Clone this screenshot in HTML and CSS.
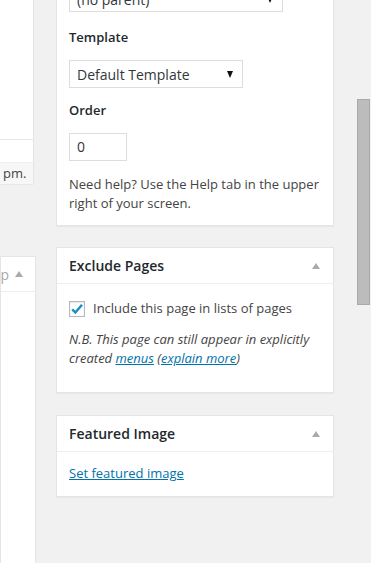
FILE: index.html
```
<!DOCTYPE html>
<html>
<head>
<meta http-equiv="content-type" content="text/html;charset=UTF-8" />
<title>Edit Page</title>
<link rel="stylesheet" href="styles.css">
</head>
<body>
  <div class="wrap">
    <div class="main-col">
      <div class="editor">
        <div class="editor-area"></div>
        <div class="editor-gap"></div>
        <div class="status-bar">pm.</div>
      </div>
      <div class="postbox left-box">
        <h2 class="hndle"><span class="cut">lp</span><span class="toggle"></span></h2>
        <div class="inside"></div>
      </div>
    </div>

    <div class="side-col">
      <div class="postbox attrs">
        <div class="inside">
          <div class="fake-select parent-select"><span>(no parent)</span><span class="arrow"></span></div>
          <p class="attr-label">Template</p>
          <div class="fake-select template-select"><span>Default Template</span><span class="arrow"></span></div>
          <p class="attr-label">Order</p>
          <div class="order-input">0</div>
          <p class="help">Need help? Use the Help tab in the upper right of your screen.</p>
        </div>
      </div>

      <div class="postbox exclude">
        <h2 class="hndle"><span>Exclude Pages</span><span class="toggle"></span></h2>
        <div class="inside">
          <label class="check-row">
            <span class="checkbox">
              <svg width="14" height="14" viewBox="0 0 14 14"><path d="M2.2 7.4 L5.4 10.6 L12 2.8" fill="none" stroke="#1e8cbe" stroke-width="2.4"/></svg>
            </span>
            Include this page in lists of pages
          </label>
          <p class="note">N.B. This page can still appear in explicitly created <a href="#">menus</a> (<a href="#">explain more</a>)</p>
        </div>
      </div>

      <div class="postbox featured">
        <h2 class="hndle"><span>Featured Image</span><span class="toggle"></span></h2>
        <div class="inside">
          <a href="#">Set featured image</a>
        </div>
      </div>
    </div>
  </div>

  <div class="scroll-thumb"></div>
</body>
</html>
```

FILE: styles.css
```
html, body {
  margin: 0;
  padding: 0;
  background: #f1f1f1;
  overflow: hidden;
}
body {
  font-family: "Open Sans", "Liberation Sans", sans-serif;
  font-size: 13px;
  line-height: 19px;
  color: #444;
  height: 563px;
}
a {
  color: #0073aa;
  text-decoration: underline;
}

.wrap {
  display: flex;
  gap: 20px;
  align-items: flex-start;
}

/* left column: only the right edge of the post body shows */
.main-col {
  flex: none;
  width: 36px;
}
.editor {
  width: 34px;
  background: #fff;
  border-right: 1px solid #e5e5e5;
  box-sizing: border-box;
}
.editor-area {
  height: 139px;
  border-bottom: 1px solid #e8e8e8;
}
.editor-gap {
  height: 22px;
}
.status-bar {
  height: 21px;
  line-height: 21px;
  background: #f7f7f7;
  border-top: 1px solid #f0f0f0;
  padding-left: 3px;
  font-size: 13px;
  color: #444;
  box-shadow: 0 1px 1px rgba(0,0,0,.04);
}
.left-box {
  margin-top: 72px;
  height: 320px;
  border-left: 0;
}
.left-box .hndle {
  padding-left: 0;
  padding-right: 0;
  justify-content: flex-start;
  gap: 6px;
  height: 34px;
  font-weight: 400;
  color: #aaa;
}
.left-box .cut {
  margin-left: -4px;
}

/* sidebar */
.side-col {
  flex: none;
  width: 278px;
}
.postbox {
  background: #fff;
  border: 1px solid #e5e5e5;
  box-shadow: 0 1px 1px rgba(0,0,0,.04);
  box-sizing: border-box;
}
.hndle {
  display: flex;
  justify-content: space-between;
  align-items: center;
  margin: 0;
  padding: 0 13px 0 12px;
  height: 35px;
  font-size: 14px;
  font-weight: 600;
  color: #23282d;
  border-bottom: 1px solid #eee;
}
.toggle {
  width: 0;
  height: 0;
  border-left: 4px solid transparent;
  border-right: 4px solid transparent;
  border-bottom: 6px solid #aaa;
}
.inside {
  padding: 0 12px;
}

.attrs {
  border-top: 0;
  padding-bottom: 12px;
}
.fake-select {
  display: flex;
  justify-content: space-between;
  align-items: center;
  box-sizing: border-box;
  height: 28px;
  padding: 0 9px 0 7px;
  border: 1px solid #ddd;
  background: #fff;
  color: #32373c;
  font-size: 14px;
}
.fake-select .arrow {
  width: 0;
  height: 0;
  border-left: 3px solid transparent;
  border-right: 3px solid transparent;
  border-top: 7px solid #111;
}
.parent-select {
  margin-top: -16px;
  padding-top: 3px;
  width: 214px;
}
.template-select {
  width: 174px;
}
.attr-label {
  margin: 16px 0 13px;
  font-weight: 600;
  color: #23282d;
}
.attr-label + .fake-select + .attr-label {
  margin-top: 13px;
}
.order-input {
  box-sizing: border-box;
  width: 58px;
  height: 28px;
  line-height: 26px;
  margin-top: 14px;
  padding-left: 7px;
  border: 1px solid #ddd;
  font-size: 14px;
  color: #32373c;
}
.attr-label + .order-input {
  margin-top: 0;
}
.help {
  margin: 14px 0 0;
}

.exclude {
  margin-top: 21px;
  padding-bottom: 24px;
}
.check-row {
  display: flex;
  align-items: center;
  gap: 8px;
  margin-top: 15px;
  font-size: 13px;
}
.checkbox {
  display: flex;
  align-items: center;
  justify-content: center;
  box-sizing: border-box;
  width: 16px;
  height: 16px;
  border: 1px solid #b4b9be;
  box-shadow: inset 0 1px 2px rgba(0,0,0,.1);
}
.note {
  margin: 12px 0 0;
  font-style: italic;
}

.featured {
  margin-top: 22px;
}
.featured .inside {
  padding-top: 12px;
  padding-bottom: 13px;
}

.scroll-thumb {
  position: fixed;
  left: 357px;
  top: 99px;
  width: 13px;
  height: 206px;
  box-sizing: border-box;
  background: #bcbcbc;
  border: 1px solid #a9a9a9;
}
```
